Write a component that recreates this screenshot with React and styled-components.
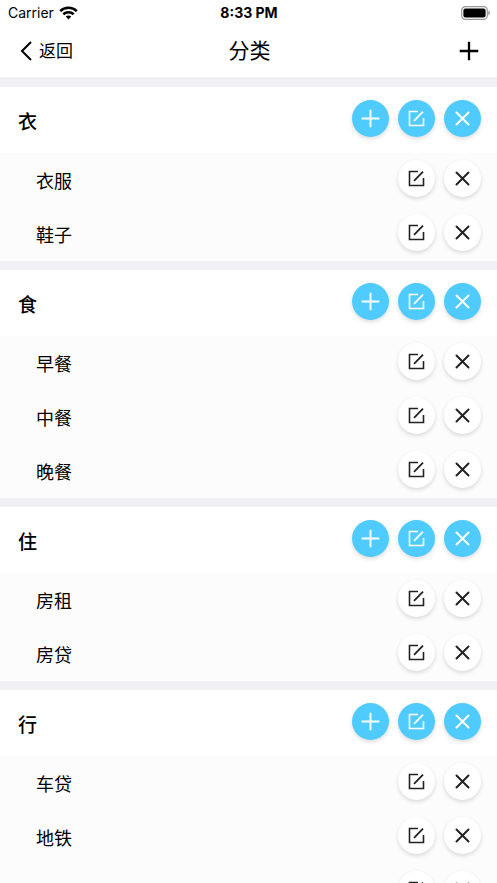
import React from "react";
import styled, { createGlobalStyle } from "styled-components";

const GlobalStyle = createGlobalStyle`
  * {
    box-sizing: border-box;
  }
  body {
    margin: 0;
    background-color: #fcfcfc;
    color: #000;
    font-family: Inter, "Noto Sans CJK SC", sans-serif;
  }
`;

const Screen = styled.div`
  display: flex;
  flex-direction: column;
  height: 100vh;
  overflow: hidden;
`;

const StatusBar = styled.div`
  display: grid;
  grid-template-columns: 1fr auto 1fr;
  align-items: center;
  flex-shrink: 0;
  height: 25px;
  padding: 0 7px 0 8px;
  background-color: #fff;
  font-size: 14px;
`;
const Carrier = styled.div`
  display: flex;
  align-items: center;
  gap: 5px;
`;
const Time = styled.div`
  font-weight: 700;
`;
const Battery = styled.div`
  display: flex;
  justify-content: flex-end;
`;

const NavBar = styled.header`
  display: grid;
  grid-template-columns: 1fr auto 1fr;
  align-items: center;
  flex-shrink: 0;
  height: 52px;
  padding: 0 18px 0 20px;
  background-color: #fff;
`;
const NavButton = styled.button`
  display: flex;
  align-items: center;
  justify-self: ${(props) => (props.$end ? "end" : "start")};
  gap: 7px;
  padding: 0;
  border: none;
  background: none;
  color: #000;
  font-family: inherit;
  font-size: 17px;
  line-height: 24px;
  cursor: pointer;
`;
const Title = styled.h1`
  margin: 0;
  font-size: 21px;
  font-weight: 400;
  line-height: 28px;
`;

const List = styled.main`
  display: flex;
  flex-direction: column;
  flex: 1;
  gap: 9px;
  min-height: 0;
  padding-top: 10px;
  overflow: hidden;
  background-color: #f0f0f5;
`;
const Section = styled.section`
  flex-shrink: 0;
`;
const Head = styled.div`
  display: flex;
  align-items: center;
  justify-content: space-between;
  height: 66px;
  padding: 0 16px 0 18px;
  background-color: #fff;
`;
const Name = styled.h2`
  margin: 0;
  font-size: 19px;
  font-weight: 500;
`;
const Items = styled.ul`
  margin: 0;
  padding: 0;
  list-style: none;
  background-color: #fcfcfc;
`;
const Item = styled.li`
  display: flex;
  align-items: center;
  justify-content: space-between;
  height: 54px;
  padding: 0 16px 0 36px;
  font-size: 18px;
`;
const Actions = styled.div`
  display: flex;
  gap: 9px;
  padding-bottom: 4px;
`;
const RoundButton = styled.button`
  display: flex;
  align-items: center;
  justify-content: center;
  width: 37px;
  height: 37px;
  padding: 0;
  border: none;
  border-radius: 50%;
  background-color: ${(props) => (props.$primary ? "#50cbff" : "#fff")};
  color: ${(props) => (props.$primary ? "#fff" : "#222")};
  box-shadow: 0 2px 4px rgba(0, 0, 0, 0.14);
  cursor: pointer;
`;

const PlusIcon = ({ size = 19, width = 2 }) => (
  <svg width={size} height={size} viewBox="0 0 20 20" fill="none" stroke="currentColor" strokeWidth={width}>
    <path d="M10 .7v18.6M.7 10h18.6" />
  </svg>
);
const EditIcon = () => (
  <svg width="17" height="17" viewBox="0 0 17 17" fill="none" stroke="currentColor" strokeWidth="1.6">
    <path d="M10 1.5H1.5v14h14V8" />
    <path d="M6 10.8l9-9.2" strokeWidth="1.8" />
  </svg>
);
const CloseIcon = () => (
  <svg
    width="15"
    height="15"
    viewBox="0 0 15 15"
    fill="none"
    stroke="currentColor"
    strokeWidth="2"
    strokeLinecap="round"
  >
    <path d="M1.5 1.5l12 12M13.5 1.5l-12 12" />
  </svg>
);
const BackIcon = () => (
  <svg width="12" height="20" viewBox="0 0 12 20" fill="none" stroke="currentColor" strokeWidth="2">
    <path d="M11 1L2 10l9 9" />
  </svg>
);
const WifiIcon = () => (
  <svg width="19" height="14" viewBox="0 0 19 14" fill="none" stroke="currentColor" strokeWidth="2.6">
    <path d="M1.2 5.1C5.8.7 13.2.7 17.8 5.1M4.3 8.3c2.9-2.8 7.5-2.8 10.4 0" />
    <path d="M6.8 10.6c1.5-1.4 3.9-1.4 5.4 0L9.5 13.4z" fill="currentColor" stroke="none" />
  </svg>
);
const BatteryIcon = () => (
  <svg width="29" height="14" viewBox="0 0 29 14">
    <rect x=".7" y=".7" width="25.6" height="12.6" rx="3.6" fill="none" stroke="#999" strokeWidth="1.2" />
    <rect x="2.4" y="2.4" width="22.2" height="9.2" rx="2" />
    <path d="M27.4 4.8c1.8.6 1.8 3.8 0 4.4z" fill="#888" />
  </svg>
);

const categories = [
  { name: "衣", items: ["衣服", "鞋子"] },
  { name: "食", items: ["早餐", "中餐", "晚餐"] },
  { name: "住", items: ["房租", "房贷"] },
  { name: "行", items: ["车贷", "地铁", "巴士"] },
];

const Category = (props) => {
  const { name, items } = props;
  return (
    <Section>
      <Head>
        <Name>{name}</Name>
        <Actions>
          <RoundButton $primary aria-label={`添加${name}`}>
            <PlusIcon />
          </RoundButton>
          <RoundButton $primary aria-label={`编辑${name}`}>
            <EditIcon />
          </RoundButton>
          <RoundButton $primary aria-label={`删除${name}`}>
            <CloseIcon />
          </RoundButton>
        </Actions>
      </Head>
      <Items>
        {items.map((item) => (
          <Item key={item}>
            <span>{item}</span>
            <Actions>
              <RoundButton aria-label={`编辑${item}`}>
                <EditIcon />
              </RoundButton>
              <RoundButton aria-label={`删除${item}`}>
                <CloseIcon />
              </RoundButton>
            </Actions>
          </Item>
        ))}
      </Items>
    </Section>
  );
};

const App = () => {
  return (
    <Screen lang="zh-CN">
      <GlobalStyle />
      <StatusBar>
        <Carrier>
          Carrier
          <WifiIcon />
        </Carrier>
        <Time>8:33 PM</Time>
        <Battery>
          <BatteryIcon />
        </Battery>
      </StatusBar>
      <NavBar>
        <NavButton>
          <BackIcon />
          返回
        </NavButton>
        <Title>分类</Title>
        <NavButton $end aria-label="添加分类">
          <PlusIcon size={20} width={2.3} />
        </NavButton>
      </NavBar>
      <List>
        {categories.map((category) => (
          <Category key={category.name} name={category.name} items={category.items} />
        ))}
      </List>
    </Screen>
  );
};
export default App;
